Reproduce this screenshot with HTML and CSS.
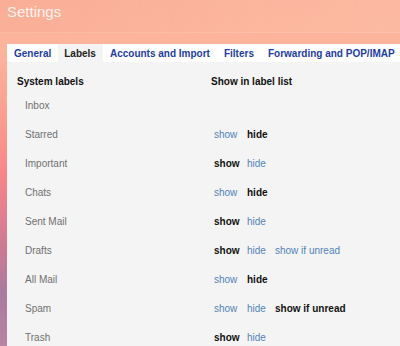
FILE: index.html
```html
<!DOCTYPE html>
<html lang="en">
<head>
  <meta charset="UTF-8" />
  <title>Settings</title>
  <link rel="stylesheet" href="styles.css">
</head>
<body>
  <!-- Page title -->
  <header class="page-header">
    <h1>Settings</h1>
  </header>

  <div class="settings">
    <!-- Tabs -->
    <nav class="tabs">
      <a href="#" class="tab">General</a>
      <span class="tab active">Labels</span>
      <a href="#" class="tab">Accounts and Import</a>
      <a href="#" class="tab">Filters</a>
      <a href="#" class="tab">Forwarding and POP/IMAP</a>
    </nav>

    <!-- Labels -->
    <div class="labels">
      <div class="label-head">
        <span>System labels</span>
        <span>Show in label list</span>
      </div>

      <div class="label-row">
        <span class="name">Inbox</span>
        <span class="opts"></span>
      </div>
      <div class="label-row">
        <span class="name">Starred</span>
        <span class="opts"><a href="#" class="opt">show</a><b class="opt">hide</b></span>
      </div>
      <div class="label-row">
        <span class="name">Important</span>
        <span class="opts"><b class="opt">show</b><a href="#" class="opt">hide</a></span>
      </div>
      <div class="label-row">
        <span class="name">Chats</span>
        <span class="opts"><a href="#" class="opt">show</a><b class="opt">hide</b></span>
      </div>
      <div class="label-row">
        <span class="name">Sent Mail</span>
        <span class="opts"><b class="opt">show</b><a href="#" class="opt">hide</a></span>
      </div>
      <div class="label-row">
        <span class="name">Drafts</span>
        <span class="opts"><b class="opt">show</b><a href="#" class="opt">hide</a><a href="#" class="opt">show if unread</a></span>
      </div>
      <div class="label-row">
        <span class="name">All Mail</span>
        <span class="opts"><a href="#" class="opt">show</a><b class="opt">hide</b></span>
      </div>
      <div class="label-row">
        <span class="name">Spam</span>
        <span class="opts"><a href="#" class="opt">show</a><a href="#" class="opt">hide</a><b class="opt">show if unread</b></span>
      </div>
      <div class="label-row">
        <span class="name">Trash</span>
        <span class="opts"><b class="opt">show</b><a href="#" class="opt">hide</a></span>
      </div>
    </div>
  </div>
</body>
</html>
```

FILE: styles.css
```css
* {
  margin: 0;
  padding: 0;
  box-sizing: border-box;
}

html, body {
  height: 100%;
  overflow: hidden;
}

body {
  display: flex;
  flex-direction: column;
  font-family: 'Liberation Sans', Arial, sans-serif;
  font-size: 10px;
  color: #222;
  background: linear-gradient(to bottom, #fbb29a 0%, #fcb59c 14%, #fba392 30%, #f8868a 50%, #d07a93 70%, #a87ba0 85%, #b983a3 100%);
}

.page-header {
  flex-shrink: 0;
  height: 33px;
  padding: 3px 7px 0;
  border-bottom: 1px solid rgba(255, 255, 255, 0.12);
  background: linear-gradient(to right, rgba(240, 150, 130, 0.15), rgba(255, 210, 190, 0.2));
}

.page-header h1 {
  font-size: 15px;
  line-height: 18px;
  font-weight: normal;
  color: rgba(255, 255, 255, 0.85);
}

.settings {
  flex: 1;
  min-height: 0;
  overflow: hidden;
  margin: 11px 0 0 7px;
  background: #f4f4f4;
}

/* Tabs */
.tabs {
  display: flex;
  height: 18px;
  background: #fff;
  white-space: nowrap;
}

.tab {
  flex-shrink: 0;
  padding: 1px 7px 0;
  line-height: 17px;
  font-weight: bold;
  color: #1d3d9f;
  text-decoration: none;
}

.tab.active {
  color: #222;
  background: #f4f4f4;
  padding: 1px 7px 0 6px;
}

/* Label list */
.labels {
  padding: 10px 0 0 10px;
}

.label-head,
.label-row {
  display: grid;
  grid-template-columns: 194px 1fr;
  align-items: center;
  white-space: nowrap;
}

.label-head {
  height: 19px;
  font-weight: bold;
  color: #111;
}

.label-row {
  height: 29px;
}

.label-row .name {
  padding-left: 8px;
  color: #707070;
}

.opts {
  display: flex;
  padding-left: 3px;
}

.opt {
  flex-shrink: 0;
  color: #5282b9;
  text-decoration: none;
}

b.opt {
  color: #111;
}

.opt:nth-child(1) {
  width: 33px;
}

.opt:nth-child(2) {
  width: 28px;
}
```
